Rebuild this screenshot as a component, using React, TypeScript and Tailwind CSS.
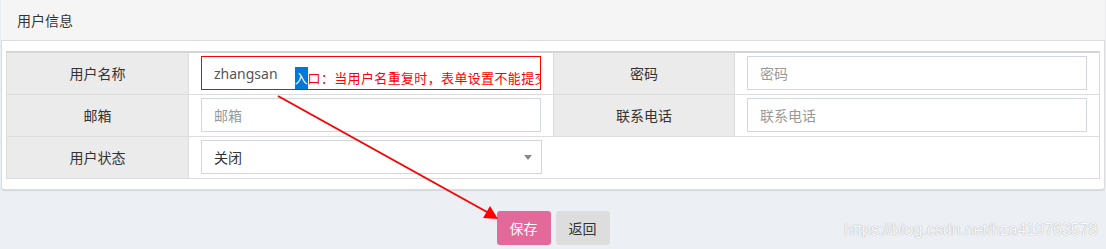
const font = { fontFamily: '"Noto Sans", "Noto Sans CJK SC", sans-serif' };

const Label = ({ text }: { text: string }) => (
  <div className="flex h-[42px] items-center justify-center border-r border-b border-[#dddddd] bg-[#ebebeb] text-[14px] text-[#333333]">
    {text}
  </div>
);

const Field = ({ placeholder }: { placeholder: string }) => (
  <div className="flex h-[42px] items-start border-r border-b border-[#dddddd] bg-white px-[12px] pt-[3px]">
    <input
      placeholder={placeholder}
      className="h-[34px] w-full border border-[#d2d6de] px-[12px] text-[14px] text-[#555555] outline-none placeholder:text-[#999999]"
    />
  </div>
);

const App = () => {
  return (
    <div
      className="relative h-[249px] w-[1106px] overflow-hidden bg-[#ecf0f5] px-[1px]"
      style={font}
    >
      <div className="rounded-b-[3px] border-x border-b border-[#dcdcdc] bg-white shadow-[0_1px_1px_rgba(0,0,0,0.1)]">
        <div className="-mx-[1px] flex h-[41px] items-center border-b border-[#dddddd] bg-[#f5f5f5] px-[16px] text-[14px] text-[#333333]">
          用户信息
        </div>
        <div className="px-[4px] pt-[10px] pb-[10px]">
          <div className="grid grid-cols-[182px_365px_181px_365px] border-t-2 border-l border-[#d4d4d4] border-l-[#dddddd]">
            {/* row 1 */}
            <Label text="用户名称" />
            <div className="flex h-[42px] items-start border-r border-b border-[#dddddd] bg-white px-[12px] pt-[3px]">
              <div className="relative flex h-[34px] w-full items-center overflow-hidden whitespace-nowrap border border-[#ff0000] pl-[12px]">
                <span className="text-[14px] text-[#555555]">zhangsan</span>
                <span className="ml-[1px] inline-block h-[19px] w-[1px] bg-[#333333]" />
                <span className="ml-[16px] mt-[12px] flex h-[24px] items-center">
                  <span className="flex h-[24px] w-[13px] items-center justify-center bg-[#0078d7] text-[13px] text-white">
                    入
                  </span>
                  <span className="text-[13px] tracking-[0.35px] text-[#ff0000]">
                    口：当用户名重复时，表单设置不能提交
                  </span>
                </span>
              </div>
            </div>
            <Label text="密码" />
            <Field placeholder="密码" />

            {/* row 2 */}
            <Label text="邮箱" />
            <Field placeholder="邮箱" />
            <Label text="联系电话" />
            <Field placeholder="联系电话" />

            {/* row 3 */}
            <Label text="用户状态" />
            <div className="flex h-[42px] items-start border-b border-[#dddddd] bg-white px-[12px] pt-[3px]">
              <div className="relative flex h-[34px] w-full items-center border border-[#d2d6de] px-[12px] text-[14px] text-[#333333]">
                关闭
                <span className="absolute right-[9px] top-[14px] h-0 w-0 border-x-[4px] border-t-[5px] border-x-transparent border-t-[#888888]" />
              </div>
            </div>
            <div className="col-span-2 h-[42px] border-r border-b border-[#dddddd] bg-white" />
          </div>
        </div>
      </div>

      <div className="mt-[21px] flex justify-center gap-[5px]">
        <button className="h-[34px] w-[54px] rounded-[3px] bg-[#e2699a] text-[14px] text-white">
          保存
        </button>
        <button className="h-[34px] w-[54px] rounded-[3px] bg-[#dddddd] text-[14px] text-[#333333]">
          返回
        </button>
      </div>

      <div
        className="absolute left-[844px] top-[219px] text-[16px] leading-[22px] text-[#f8f9fb] [text-shadow:0_0_1px_rgba(140,140,140,0.9)]"
        style={{ fontFamily: '"Liberation Sans", Arial, sans-serif' }}
      >
        https://blog.csdn.net/hza419763578
      </div>

      <svg
        className="pointer-events-none absolute left-0 top-0"
        width="1106"
        height="249"
        viewBox="0 0 1106 249"
      >
        <line x1="278" y1="96" x2="487" y2="212" stroke="#ff0000" strokeWidth="2" />
        <polygon points="498,219 483,218 490,206" fill="#ff0000" />
      </svg>
    </div>
  );
};

export default App;
